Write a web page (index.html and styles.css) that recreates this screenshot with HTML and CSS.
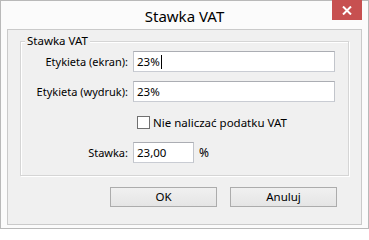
FILE: index.html
```html
<!DOCTYPE html>
<html lang="pl">
<head>
<meta charset="utf-8">
<title>Stawka VAT</title>
<link rel="stylesheet" href="styles.css">
</head>
<body>
<div class="window">
  <div class="titlebar">
    <span class="tb-side"></span>
    <span class="title">Stawka VAT</span>
    <span class="tb-side tb-right">
      <span class="close">
        <svg width="10" height="9" viewBox="0 0 10 9"><path d="M1 0.5 L9 8.5 M9 0.5 L1 8.5" stroke="#fff" stroke-width="2" fill="none"/></svg>
      </span>
    </span>
  </div>
  <div class="client">
    <div class="group">
      <span class="legend">Stawka VAT</span>
      <div class="row">
        <span class="lbl">Etykieta (ekran):</span>
        <span class="input wide">23%<span class="caret"></span></span>
      </div>
      <div class="row row2">
        <span class="lbl">Etykieta (wydruk):</span>
        <span class="input wide">23%</span>
      </div>
      <div class="row check-row">
        <span class="lbl"></span>
        <span class="checkbox"></span>
        <span class="check-text">Nie naliczać podatku VAT</span>
      </div>
      <div class="row row4">
        <span class="lbl">Stawka:</span>
        <span class="input narrow">23,00</span>
        <span class="unit">%</span>
      </div>
    </div>
    <div class="buttons">
      <span class="btn">OK</span>
      <span class="btn">Anuluj</span>
    </div>
  </div>
</div>
</body>
</html>
```

FILE: styles.css
```css
html, body {
  margin: 0;
  padding: 0;
  background: #ffffff;
}
body {
  font-family: "Noto Sans", "Open Sans", sans-serif;
  font-size: 11px;
  color: #000;
}
.window {
  width: 369px;
  height: 229px;
  box-sizing: border-box;
  border: 1px solid #b9b9b9;
  background: #fbfbfb;
  padding: 0 6px 3px 6px;
  display: flex;
  flex-direction: column;
}
.titlebar {
  height: 28px;
  display: grid;
  grid-template-columns: 1fr auto 1fr;
  align-items: start;
  margin: 0 -6px;
}
.title {
  font-size: 15px;
  line-height: 28px;
  color: #000;
  padding-top: 1px;
}
.tb-right {
  display: flex;
  justify-content: flex-end;
  padding-right: 6px;
}
.close {
  width: 30px;
  height: 20px;
  margin-top: -1px;
  background: #c75050;
  display: flex;
  align-items: center;
  justify-content: center;
}
.client {
  flex: 1;
  border: 1px solid #cacaca;
  background: #f0f0f0;
  display: flex;
  flex-direction: column;
}
.group {
  position: relative;
  margin: 11px 12px 0 12px;
  border: 1px solid #d5d5d5;
  box-shadow: inset 1px 1px 0 #fff, 1px 1px 0 #fff;
  padding: 9px 0 12px 0;
}
.legend {
  position: absolute;
  left: 4px;
  top: -9px;
  padding: 0 2px;
  background: #f0f0f0;
  line-height: 16px;
  font-size: 11.5px;
}
.row {
  display: flex;
  align-items: center;
  height: 21px;
}
.row2 { margin-top: 9px; }
.check-row { margin-top: 12px; height: 17px; }
.check-text { font-size: 11.5px; }
.row4 { margin-top: 11px; }
.lbl {
  width: 107px;
  margin-right: 5px;
  text-align: right;
  flex: none;
}
.input {
  box-sizing: border-box;
  height: 21px;
  background: #fff;
  border: 1px solid #abadb3;
  border-color: #abadb3 #c2c5cb #c9ccd3 #c2c5cb;
  padding: 0 3px;
  line-height: 19px;
  display: flex;
  align-items: center;
  flex: none;
  font-size: 11.5px;
}
.wide { width: 202px; }
.narrow { width: 61px; }
.caret {
  display: inline-block;
  width: 1px;
  height: 14px;
  background: #000;
  margin-left: 1px;
}
.unit { margin-left: 5px; font-size: 12px; }
.checkbox {
  box-sizing: border-box;
  width: 13px;
  height: 13px;
  border: 1px solid #707070;
  background: #fff;
  margin-left: 4px;
  margin-right: 3px;
  flex: none;
}
.buttons {
  display: flex;
  justify-content: flex-end;
  gap: 13px;
  margin-top: 11px;
  padding-right: 24px;
}
.btn {
  box-sizing: border-box;
  width: 107px;
  height: 20px;
  border: 1px solid #acacac;
  background: linear-gradient(#f0f0f0, #e5e5e5);
  display: flex;
  align-items: center;
  justify-content: center;
  line-height: 18px;
  font-size: 11.5px;
}
```
